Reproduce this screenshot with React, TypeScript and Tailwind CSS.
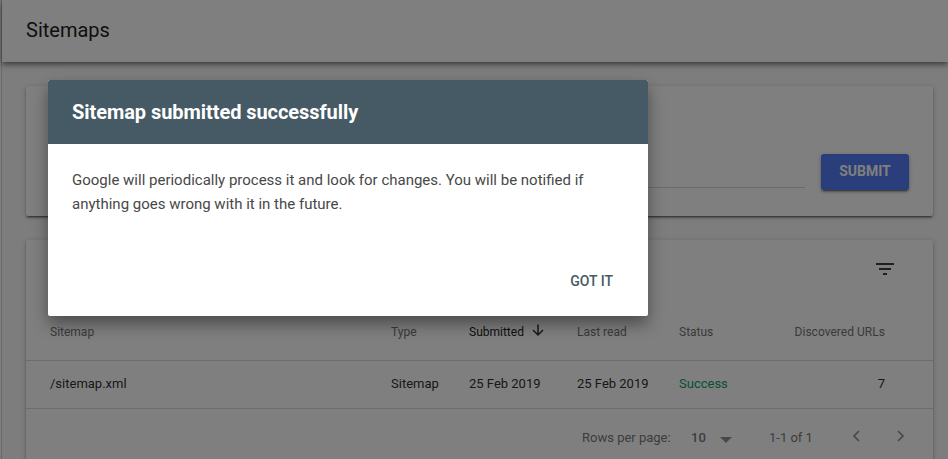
import React from "react";

const cols = "grid grid-cols-[341px_78px_108px_102px_100px_106px] pl-6";

function SubmitCard() {
  return (
    <section className="flex h-[130px] items-start rounded-[2px] bg-white pl-6 pr-6 pt-[68px] shadow-[0_2px_2px_rgba(0,0,0,0.24),0_3px_1px_-2px_rgba(0,0,0,0.3),0_1px_5px_rgba(0,0,0,0.2)]">
      <div className="mr-4 h-[34px] flex-1 border-b border-[#d4d4d4]" />
      <button className="flex h-9 w-[88px] items-center justify-center rounded-[3px] bg-[#527cf4] pb-[2px] text-sm font-bold leading-4 text-white shadow-[0_2px_2px_rgba(0,0,0,0.24),0_3px_1px_-2px_rgba(0,0,0,0.3),0_1px_5px_rgba(0,0,0,0.2)]">
        SUBMIT
      </button>
    </section>
  );
}

function SitemapTable() {
  return (
    <section className="flex h-[300px] flex-col rounded-[2px] bg-white shadow-[0_2px_2px_rgba(0,0,0,0.24),0_3px_1px_-2px_rgba(0,0,0,0.3),0_1px_5px_rgba(0,0,0,0.2)]">
      <div className="flex h-[63px] justify-end pr-9 pt-[17px]">
        <svg className="h-6 w-6" viewBox="0 0 24 24" fill="#404040">
          <path d="M3 6h18v2H3zM6 11h12v2H6zM10 16h4v2h-4z" />
        </svg>
      </div>
      <div className={`${cols} h-[58px] items-center border-b border-[#d8d8d8] text-xs leading-4 text-[#757575]`}>
        <span>Sitemap</span>
        <span>Type</span>
        <span className="flex items-center text-[#212121]">
          Submitted
          <svg className="-mt-[3px] ml-[6px] h-4 w-4 shrink-0" viewBox="0 0 16 16" fill="none" stroke="#303030" strokeWidth="1.5">
            <path d="M8 2.5v10.5M3 8l5 5 5-5" />
          </svg>
        </span>
        <span>Last read</span>
        <span>Status</span>
        <span className="text-right tracking-[0.03px]">Discovered URLs</span>
      </div>
      <div className={`${cols} h-12 items-center border-b border-[#d8d8d8] pb-[2px] text-[13px] leading-4 text-[#303030]`}>
        <span>/sitemap.xml</span>
        <span>Sitemap</span>
        <span>25 Feb 2019</span>
        <span>25 Feb 2019</span>
        <span className="text-[#0fa063]">Success</span>
        <span className="text-right">7</span>
      </div>
      <div className="flex h-[58px] items-center justify-end pr-[28px] text-[13px] text-[#7a7a7a]">
        <span className="w-[109px]">Rows per page:</span>
        <span className="w-[29px] font-medium">10</span>
        <svg className="mr-[37px] mt-1 h-[6px] w-3" viewBox="0 0 12 6" fill="#909090">
          <path d="M0 0h12L6 6z" />
        </svg>
        <span className="w-[83px]">1-1 of 1</span>
        <svg className="-mt-[4px] mr-[37px] h-3 w-2" viewBox="0 0 8 12" fill="none" stroke="#909090" strokeWidth="1.7">
          <path d="M7 1L2 6l5 5" />
        </svg>
        <svg className="-mt-[4px] h-3 w-2" viewBox="0 0 8 12" fill="none" stroke="#909090" strokeWidth="1.7">
          <path d="M1 1l5 5-5 5" />
        </svg>
      </div>
    </section>
  );
}

export default function App() {
  return (
    <div className="relative h-[459px] w-[948px] overflow-hidden bg-[#fafafa] font-['Roboto',sans-serif]">
      <div className="ml-px h-[459px] border-l border-[#d5d5d5]">
        <header className="flex h-[62px] items-center bg-white pl-6 text-xl text-[#212121] shadow-[0_2px_6px_rgba(0,0,0,0.6)]">
          <h1 className="-mt-[2px]">Sitemaps</h1>
        </header>
        <main className="flex flex-col gap-6 pl-6 pr-[15px] pt-6">
          <SubmitCard />
          <SitemapTable />
        </main>
      </div>
      <div className="absolute inset-0 bg-black/50" />
      <div
        role="dialog"
        className="absolute left-12 top-20 flex h-[236px] w-[600px] flex-col overflow-hidden rounded-[2px] bg-white shadow-[0_8px_16px_rgba(0,0,0,0.4)]"
      >
        <h2 className="flex h-16 items-center bg-[#455a64] pl-6 text-xl font-bold tracking-[-0.06px] text-white">
          Sitemap submitted successfully
        </h2>
        <p className="px-6 pt-6 text-[15px] leading-6 text-[#484848]">
          Google will periodically process it and look for changes. You will be notified if
          <br />
          anything goes wrong with it in the future.
        </p>
        <div className="mt-auto flex h-[70px] items-center justify-end pr-[35px]">
          <button className="text-sm font-medium text-[#455a64]">GOT IT</button>
        </div>
      </div>
    </div>
  );
}
